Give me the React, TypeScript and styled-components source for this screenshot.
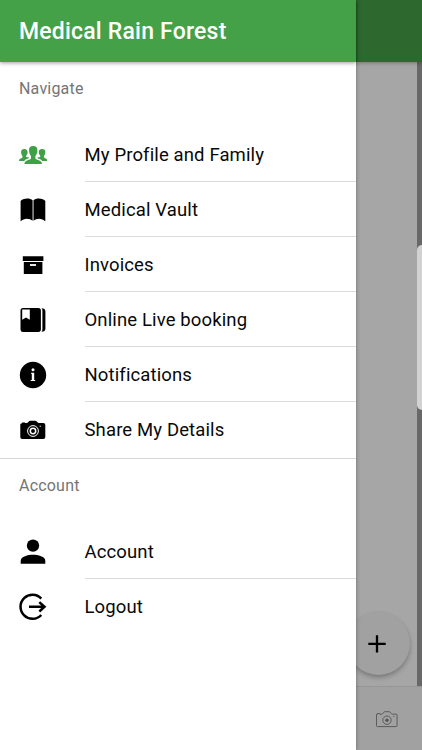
import React from "react";
import styled, { createGlobalStyle } from "styled-components";

const GlobalStyle = createGlobalStyle`
  * { box-sizing: border-box; }
  body { margin: 0; background: #a6a6a6; font-family: Roboto, "Liberation Sans", sans-serif; }
`;

const Screen = styled.div`
  display: flex;
  width: 422px;
  height: 750px;
  overflow: hidden;
`;

const Drawer = styled.nav`
  position: relative;
  z-index: 2;
  flex: 0 0 356px;
  background: #fff;
  box-shadow: 0 0 4px rgba(0, 0, 0, 0.35);
`;

const DrawerHeader = styled.header`
  display: flex;
  align-items: center;
  height: 62px;
  padding: 2px 0 0 19px;
  background: #45a148;
  box-shadow: 0 1px 4px rgba(0, 0, 0, 0.4);
`;

const Title = styled.h1`
  margin: 0;
  color: #fff;
  font-size: 23px;
  font-weight: 500;
  line-height: 26px;
  letter-spacing: 0.2px;
  white-space: nowrap;
`;

const Section = styled.section<{ $divided?: boolean }>`
  padding-bottom: 1px;
  border-bottom: ${(p) => (p.$divided ? "1px solid #d8d8d8" : "0")};
`;

const SectionLabel = styled.h2`
  height: 65px;
  margin: 0;
  padding: 17px 0 0 19px;
  color: #757575;
  font-size: 16px;
  font-weight: 400;
  line-height: 19px;
  letter-spacing: 0.2px;
`;

const Row = styled.a`
  display: flex;
  height: 55px;
  padding-left: 19px;
  color: #080808;
`;

const IconSlot = styled.span<{ $color?: string }>`
  display: flex;
  align-items: center;
  flex: 0 0 65.5px;
  padding-top: 1px;
  color: ${(p) => p.$color ?? "#000"};
`;

const RowText = styled.span<{ $last?: boolean }>`
  display: flex;
  align-items: center;
  flex: 1;
  padding-top: 1px;
  border-bottom: ${(p) => (p.$last ? "1px solid transparent" : "1px solid #dcdcdc")};
  font-size: 18.5px;
  letter-spacing: 0.13px;
`;

const Backdrop = styled.main`
  position: relative;
  display: flex;
  flex-direction: column;
  flex: 1;
  background: #a6a6a6;
`;

const DimHeader = styled.div`
  z-index: 1;
  height: 62px;
  background: #2d692f;
  box-shadow: 0 1px 4px rgba(0, 0, 0, 0.3);
`;

const Content = styled.div`
  display: flex;
  flex: 1;
  justify-content: flex-end;
`;

const Track = styled.div`
  width: 5px;
  padding-top: 183px;
  background: #686868;
`;

const Thumb = styled.div`
  height: 165px;
  border-radius: 5px 0 0 5px;
  background: #d2d2d2;
`;

const TabBar = styled.footer`
  display: flex;
  align-items: center;
  height: 64px;
  padding-left: 19px;
  border-top: 1px solid #969696;
  background: #a1a1a1;
`;

const Fab = styled.button`
  position: absolute;
  right: 12px;
  bottom: 75px;
  display: flex;
  align-items: center;
  justify-content: center;
  width: 63px;
  height: 63px;
  padding: 1px 3px 0 0;
  border: 0;
  border-radius: 50%;
  background: #a1a1a1;
  color: #000;
  box-shadow: 0 3px 5px rgba(0, 0, 0, 0.22), 0 1px 3px rgba(0, 0, 0, 0.08);
`;

const Glyph = ({ children }: { children: React.ReactNode }) => (
  <svg width="28" height="28" viewBox="0 0 28 28" fill="currentColor" aria-hidden="true">
    {children}
  </svg>
);

const PeopleIcon = () => (
  <Glyph>
    <path d="M14.200 5c-3 0-4.400 1.800-4.200 4.400.1 2.700.9 4.300 2 5.500v2.500c-.5 1.500-6.200 1.300-6.600 5.500H23c-.4-4.200-6.100-4-6.600-5.500v-2.500c1.100-1.200 1.900-2.800 2-5.500C18.600 6.800 17.200 5 14.200 5Z" />
    <path id="side-person" d="M5.300 8C2.900 8 2 9.400 2.100 11.300c.1 1.900.6 2.900 1.400 3.700v1.300C3 17.600.2 17 0 20h5.200c1-1.500 2.700-2 4.700-2.700v-.8c-1.400-.2-2.600-.2-2.800-1v-.7c.9-.9 1.400-1.700 1.500-3.500C8.700 9.400 7.600 8 5.300 8Z" />
    <use href="#side-person" transform="matrix(-1 0 0 1 28.400 0)" />
  </Glyph>
);

const BookIcon = () => (
  <Glyph>
    <path d="M1.600 5C3.200 2.300 10.800 1.300 13.600 4.300v20.500c-2.700-2.700-8.700-3.300-12 .7Z" />
    <path d="M14.500 4.300C17.300 1.300 24.700 2.300 26.300 5v20.500c-3.300-4-9.100-3.400-11.800-.7Z" />
  </Glyph>
);

const ArchiveIcon = () => (
  <Glyph>
    <path d="M3.800 5.200h20.600v4.900H3.800ZM4.800 11h18.600v12H4.800Z" />
    <path fill="#fff" d="M11 13.100h6v1.800h-6Z" />
  </Glyph>
);

const BookingIcon = () => (
  <Glyph>
    <path fillRule="evenodd" d="M4 2.100h15.500c1.500 0 2.400.9 2.400 2.400v19c0 1.500-.9 2.400-2.400 2.400H4c-1.600 0-2.500-1.100-2.500-2.700V4.800c0-1.600.9-2.700 2.500-2.700ZM3.200 3.600v10.200L7 11.400l3.800 2.400V3.600Z" />
    <path d="M22.500 2.300c.6.800.9 1.400.9 2.300v18.800c0 .9-.3 1.500-.9 2.300 2.400 0 3.900-1 3.900-3V5.300c0-2-1.500-3-3.900-3Z" />
  </Glyph>
);

const InfoIcon = () => (
  <Glyph>
    <circle cx="14" cy="14" r="13.200" />
    <circle cx="14" cy="8.800" r="1.500" fill="#fff" />
    <path fill="#fff" d="M12 11.800h3.200v7.300h1V20h-4.500v-.9h1.100v-6.400H12Z" />
  </Glyph>
);

const CameraIcon = () => (
  <Glyph>
    <path d="M3 7.200v-.7h3v.6h2c1.200-.2 2-2.300 3.200-2.300h5.200c1.200 0 2 2.100 3.200 2.300h4.700c1.200 0 2 .8 2 2v11.800c0 1.200-.8 2-2 2h-21c-1.200 0-2-.8-2-2V9c0-1.100.5-1.700 1.700-1.800Z" />
    <circle cx="14" cy="15" r="5.400" fill="none" stroke="#fff" strokeWidth="1" />
    <circle cx="14" cy="15" r="2.700" fill="none" stroke="#fff" strokeWidth="1.500" />
    <circle cx="21.200" cy="10.200" r=".6" fill="#fff" />
  </Glyph>
);

const PersonIcon = () => (
  <Glyph>
    <circle cx="14" cy="7.600" r="6.200" />
    <path d="M1.700 25.700v-2.900c0-4.400 7.300-6.100 12.300-6.100s12.300 1.700 12.300 6.100v2.900Z" />
  </Glyph>
);

const LogoutIcon = () => (
  <Glyph>
    <path d="M22.300 5.600A12 12 0 1 0 22.300 22M10 13.800h15.500M20.300 9.100l5.200 4.700-5.200 4.700" fill="none" stroke="currentColor" strokeWidth="2.500" />
  </Glyph>
);

const PlusIcon = () => (
  <svg width="20" height="20" viewBox="0 0 20 20" aria-hidden="true">
    <path d="M10 1.200v17.400M1.300 9.900h17.400" stroke="currentColor" strokeWidth="2.300" />
  </svg>
);

const CameraOutlineIcon = () => (
  <svg width="24" height="20" viewBox="0 0 24 20" fill="none" stroke="#555" strokeWidth=".9" aria-hidden="true">
    <path d="M1.500 5.200h1V4.500h2.300v.7h2c1 0 1.900-2.500 2.900-2.500h4.600c1 0 1.900 2.500 2.900 2.500h4c.6 0 .9.300.9.900v10.600c0 .6-.3.900-.9.900H2.400c-.6 0-.9-.3-.9-.9Z" />
    <circle cx="12" cy="11.200" r="4.200" />
    <circle cx="12" cy="11.200" r="1.700" fill="#555" stroke="none" />
    <path d="M18.300 7.500h1" />
  </svg>
);

type Item = { label: string; icon: React.ReactNode; color?: string };

const navigation: Item[] = [
  { label: "My Profile and Family", icon: <PeopleIcon />, color: "#3fa046" },
  { label: "Medical Vault", icon: <BookIcon /> },
  { label: "Invoices", icon: <ArchiveIcon /> },
  { label: "Online Live booking", icon: <BookingIcon /> },
  { label: "Notifications", icon: <InfoIcon /> },
  { label: "Share My Details", icon: <CameraIcon /> },
];

const account: Item[] = [
  { label: "Account", icon: <PersonIcon /> },
  { label: "Logout", icon: <LogoutIcon /> },
];

const MenuRows = ({ items }: { items: Item[] }) => (
  <>
    {items.map((item, i) => (
      <Row key={item.label}>
        <IconSlot $color={item.color}>{item.icon}</IconSlot>
        <RowText $last={i === items.length - 1}>{item.label}</RowText>
      </Row>
    ))}
  </>
);

export default function App() {
  return (
    <>
      <GlobalStyle />
      <Screen>
        <Drawer>
          <DrawerHeader>
            <Title>Medical Rain Forest</Title>
          </DrawerHeader>
          <Section $divided>
            <SectionLabel>Navigate</SectionLabel>
            <MenuRows items={navigation} />
          </Section>
          <Section>
            <SectionLabel>Account</SectionLabel>
            <MenuRows items={account} />
          </Section>
        </Drawer>
        <Backdrop>
          <DimHeader />
          <Content>
            <Track>
              <Thumb />
            </Track>
          </Content>
          <TabBar>
            <CameraOutlineIcon />
          </TabBar>
          <Fab aria-label="Add">
            <PlusIcon />
          </Fab>
        </Backdrop>
      </Screen>
    </>
  );
}
